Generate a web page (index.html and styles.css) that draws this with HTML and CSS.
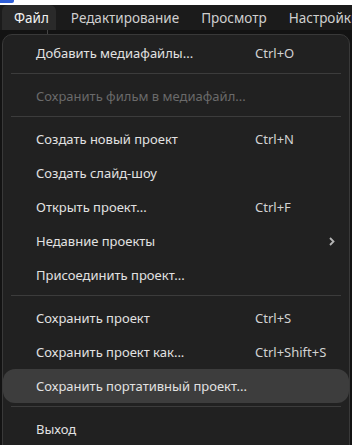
FILE: index.html
```html
<!DOCTYPE html>
<html lang="ru">
<head>
    <meta charset="UTF-8">
    <meta name="viewport" content="width=device-width, initial-scale=1.0">
    <title>Файл</title>
    <link rel="stylesheet" href="styles.css">
</head>
<body>
    <div class="topstrip"><span class="tab-mark"></span></div>

    <!-- menu bar -->
    <div class="menubar">
        <span class="menubar-item active">Файл</span>
        <span class="menubar-item">Редактирование</span>
        <span class="menubar-item">Просмотр</span>
        <span class="menubar-item">Настройки</span>
    </div>

    <div class="workspace">
        <span class="connector"></span>

        <!-- file menu dropdown -->
        <div class="dropdown">
            <div class="row"><span class="label">Добавить медиафайлы...</span><span class="shortcut">Ctrl+O</span></div>
            <div class="sep"></div>
            <div class="row disabled"><span class="label">Сохранить фильм в медиафайл...</span></div>
            <div class="sep"></div>
            <div class="row"><span class="label">Создать новый проект</span><span class="shortcut">Ctrl+N</span></div>
            <div class="row"><span class="label">Создать слайд-шоу</span></div>
            <div class="row"><span class="label">Открыть проект...</span><span class="shortcut">Ctrl+F</span></div>
            <div class="row"><span class="label">Недавние проекты</span>
                <svg class="chevron" width="6" height="9" viewBox="0 0 6 9"><polyline points="1,1 4.5,4.5 1,8" fill="none" stroke="#b5b5b5" stroke-width="1.8"/></svg>
            </div>
            <div class="row"><span class="label">Присоединить проект...</span></div>
            <div class="sep"></div>
            <div class="row"><span class="label">Сохранить проект</span><span class="shortcut">Ctrl+S</span></div>
            <div class="row"><span class="label">Сохранить проект как...</span><span class="shortcut">Ctrl+Shift+S</span></div>
            <div class="row hover"><span class="label">Сохранить портативный проект...</span></div>
            <div class="sep"></div>
            <div class="row"><span class="label">Выход</span></div>
        </div>
    </div>
</body>
</html>
```

FILE: styles.css
```css
/* page */
body {
  margin: 0;
  width: 352px;
  height: 445px;
  overflow: hidden;
  background-color: #131313;
  font-family: "Noto Sans", "Open Sans", sans-serif;
}

/* white strip above the window */
.topstrip {
  height: 5px;
  background-color: #ffffff;
}

.tab-mark {
  display: block;
  width: 14px;
  height: 3px;
  background-color: #2f5fd8;
  border-radius: 0 0 2px 0;
}

/* menu bar */
.menubar {
  display: flex;
  height: 25px;
  background-color: #1b1b1b;
  padding-left: 2px;
  white-space: nowrap;
  overflow: hidden;
}

.menubar-item {
  display: flex;
  align-items: center;
  padding: 0 11px;
  font-size: 13.5px;
  color: #cfcfcf;
  border-radius: 6px 6px 0 0;
}

.menubar-item.active {
  background-color: #2a2a2a;
  color: #f2f2f2;
  padding: 0 7px 0 12px;
  margin-right: 4px;
}

/* area under the bar */
.workspace {
  position: relative;
  padding: 4px 2px 0 2px;
}

.connector {
  position: absolute;
  left: 47px;
  top: 0;
  width: 1px;
  height: 4px;
  background-color: #444;
}

/* dropdown panel */
.dropdown {
  background-color: #212121;
  border: 1px solid #393939;
  border-radius: 10px;
  padding-top: 1px;
  height: 420px;
}

.row {
  display: flex;
  align-items: center;
  height: 34px;
  padding-left: 33px;
  font-size: 13px;
  color: #e2e2e2;
  border-radius: 12px;
  white-space: nowrap;
}

.row .label {
  width: 219px;
}

.row .shortcut {
  color: #d2d2d2;
}

.row.disabled {
  color: #6a6a6a;
}

.row.hover {
  background-color: #3d3d3d;
}

.chevron {
  margin-left: 74px;
}

/* separator line */
.sep {
  height: 1px;
  margin: 3px 8px 5px 8px;
  background-color: #3c3c3c;
}
```
